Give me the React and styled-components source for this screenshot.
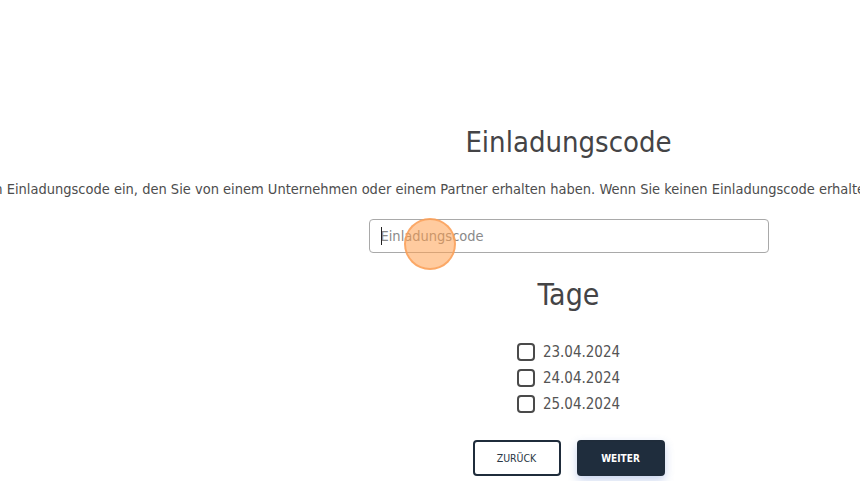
import React from "react";
import styled, { createGlobalStyle } from "styled-components";

const GlobalStyle = createGlobalStyle`
  html, body {
    margin: 0;
    padding: 0;
    background: #ffffff;
    overflow: hidden;
  }
  body {
    font-family: "DejaVu Sans Condensed", "Liberation Sans", sans-serif;
    color: #4a4a4a;
  }
`;

const Page = styled.div`
  display: flex;
  width: 860px;
  height: 481px;
  overflow: hidden;
`;

const Sidebar = styled.div`
  flex: 0 0 277px;
`;

const Main = styled.main`
  flex: 1;
  min-width: 0;
  display: flex;
  flex-direction: column;
  align-items: center;
  padding-top: 122px;
`;

const Heading = styled.h1`
  margin: ${(p) => p.$mt || 0}px 0 0;
  font-size: ${(p) => p.$size}px;
  font-weight: 400;
  line-height: 40px;
  color: #444446;
`;

const Lead = styled.p`
  margin: 17px 0 0;
  font-size: 14.5px;
  line-height: 20px;
  white-space: nowrap;
  color: #4d4d4d;
`;

const InputWrap = styled.div`
  position: relative;
  margin-top: 20px;
`;

const CodeInput = styled.input`
  box-sizing: border-box;
  display: block;
  width: 400px;
  height: 34px;
  padding: 0 11px;
  border: 1px solid #a9a9a9;
  border-radius: 4px;
  font-family: inherit;
  font-size: 14.5px;
  color: #333;
  outline: none;

  &::placeholder {
    color: #8a8a8a;
  }
`;

const Caret = styled.span`
  position: absolute;
  left: 12px;
  top: 8px;
  width: 1px;
  height: 18px;
  background: #222;
`;

const ClickMark = styled.span`
  position: absolute;
  left: 35px;
  top: -1px;
  width: 52px;
  height: 52px;
  border-radius: 50%;
  background: rgba(255, 160, 80, 0.55);
  border: 2px solid rgba(250, 160, 90, 0.8);
  box-sizing: border-box;
`;

const Days = styled.div`
  display: flex;
  flex-direction: column;
  gap: 8px;
  margin-top: 28px;
`;

const Day = styled.label`
  display: flex;
  align-items: center;
  gap: 8px;
  font-size: 15px;
  line-height: 18px;
  color: #555;
`;

const Box = styled.span`
  box-sizing: border-box;
  width: 18px;
  height: 18px;
  border: 2px solid #4a4a4a;
  border-radius: 4px;
`;

const Actions = styled.div`
  display: flex;
  gap: 16px;
  margin-top: 27px;
`;

const Button = styled.button`
  box-sizing: border-box;
  width: 88px;
  height: 36px;
  border-radius: 4px;
  border: 2px solid #1f2c3b;
  font-family: inherit;
  font-size: ${(p) => (p.$primary ? 10 : 10.5)}px;
  font-weight: ${(p) => (p.$primary ? 700 : 400)};
  text-transform: uppercase;
  background: ${(p) => (p.$primary ? "#1f2d3d" : "#ffffff")};
  color: ${(p) => (p.$primary ? "#ffffff" : "#2a3645")};
  box-shadow: ${(p) => (p.$primary ? "0 4px 10px rgba(70, 110, 200, 0.3)" : "none")};
`;

const days = ["23.04.2024", "24.04.2024", "25.04.2024"];

export default function App() {
  return (
    <>
      <GlobalStyle />
      <Page>
        <Sidebar />
        <Main>
          <Heading $size={29}>Einladungscode</Heading>
          <Lead>
            Bitte geben Sie Ihren Einladungscode ein, den Sie von einem Unternehmen oder einem Partner
            erhalten haben. Wenn Sie keinen Einladungscode erhalten haben, wenden Sie sich bitte direkt an unseren Veranstalter.
          </Lead>
          <InputWrap>
            <CodeInput placeholder="Einladungscode" />
            <Caret />
            <ClickMark />
          </InputWrap>
          <Heading as="h2" $size={30} $mt={22}>
            Tage
          </Heading>
          <Days>
            {days.map((d) => (
              <Day key={d}>
                <Box />
                {d}
              </Day>
            ))}
          </Days>
          <Actions>
            <Button>Zurück</Button>
            <Button $primary>Weiter</Button>
          </Actions>
        </Main>
      </Page>
    </>
  );
}
